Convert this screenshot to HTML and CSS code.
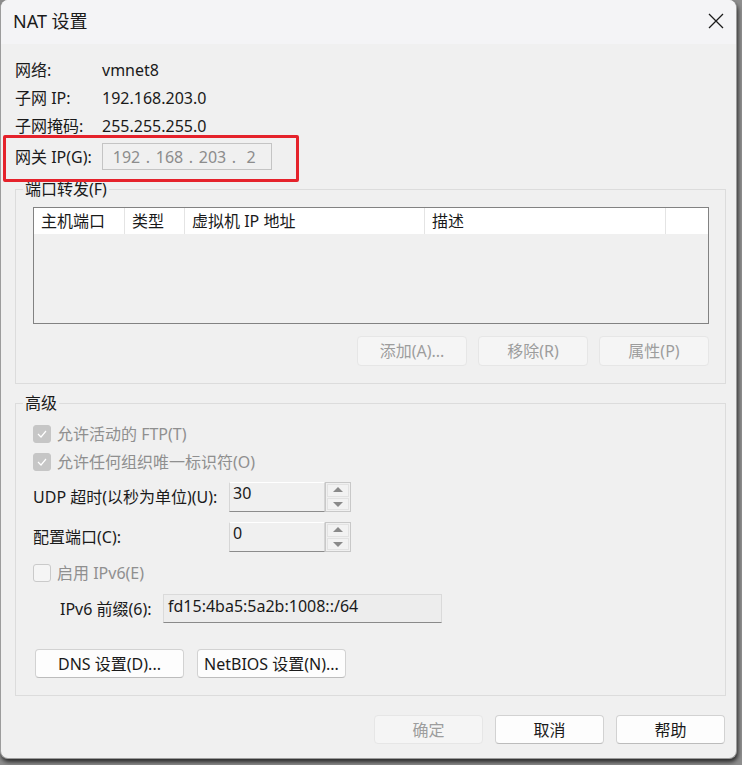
FILE: index.html
```html
<!DOCTYPE html>
<html lang="zh-CN">
<head>
    <meta charset="UTF-8">
    <title>NAT 设置</title>
    <link rel="stylesheet" href="styles.css">
</head>
<body>
    <div class="window">
        <div class="titlebar">
            <span class="title">NAT 设置</span>
            <svg class="close" width="16" height="16" viewBox="0 0 16 16">
                <path d="M1 1 L15 15 M15 1 L1 15" stroke="#1b1b1b" stroke-width="1.3" fill="none"/>
            </svg>
        </div>

        <div class="content">
            <div class="info">
                <div class="info-row"><span class="key">网络:</span><span>vmnet8</span></div>
                <div class="info-row"><span class="key">子网 IP:</span><span>192.168.203.0</span></div>
                <div class="info-row"><span class="key">子网掩码:</span><span>255.255.255.0</span></div>
                <div class="info-row gateway">
                    <span class="key">网关 IP(G):</span>
                    <div class="ip-box">
                        <span class="oct">192</span><span class="dot">.</span>
                        <span class="oct">168</span><span class="dot">.</span>
                        <span class="oct">203</span><span class="dot">.</span>
                        <span class="oct">2</span>
                    </div>
                </div>
            </div>

            <fieldset class="group">
                <legend>端口转发(F)</legend>
                <div class="grid">
                    <div class="grid-head">
                        <span class="c1">主机端口</span>
                        <span class="c2">类型</span>
                        <span class="c3">虚拟机 IP 地址</span>
                        <span class="c4">描述</span>
                        <span class="c5"></span>
                    </div>
                </div>
                <div class="btn-row">
                    <button class="btn" disabled>添加(A)...</button>
                    <button class="btn" disabled>移除(R)</button>
                    <button class="btn" disabled>属性(P)</button>
                </div>
            </fieldset>

            <fieldset class="group advanced">
                <legend>高级</legend>
                <div class="check-row first">
                    <span class="box checked"><svg width="10" height="8" viewBox="0 0 10 8"><path d="M1 4 L4 7 L9 1" stroke="#fff" stroke-width="1.2" fill="none"/></svg></span>
                    <span>允许活动的 FTP(T)</span>
                </div>
                <div class="check-row">
                    <span class="box checked"><svg width="10" height="8" viewBox="0 0 10 8"><path d="M1 4 L4 7 L9 1" stroke="#fff" stroke-width="1.2" fill="none"/></svg></span>
                    <span>允许任何组织唯一标识符(O)</span>
                </div>
                <div class="spin-row udp">
                    <span class="spin-label">UDP 超时(以秒为单位)(U):</span>
                    <div class="spin">
                        <span class="spin-input">30</span>
                        <div class="spin-btns">
                            <span class="up"></span>
                            <span class="down"></span>
                        </div>
                    </div>
                </div>
                <div class="spin-row port">
                    <span class="spin-label">配置端口(C):</span>
                    <div class="spin">
                        <span class="spin-input">0</span>
                        <div class="spin-btns">
                            <span class="up"></span>
                            <span class="down"></span>
                        </div>
                    </div>
                </div>
                <div class="check-row ipv6">
                    <span class="box"></span>
                    <span>启用 IPv6(E)</span>
                </div>
                <div class="prefix-row">
                    <span class="prefix-label">IPv6 前缀(6):</span>
                    <span class="prefix-field">fd15:4ba5:5a2b:1008::/64</span>
                </div>
                <div class="dns-row">
                    <button class="btn wide">DNS 设置(D)...</button>
                    <button class="btn wide">NetBIOS 设置(N)...</button>
                </div>
            </fieldset>
        </div>

        <div class="footer">
            <button class="btn foot" disabled>确定</button>
            <button class="btn foot">取消</button>
            <button class="btn foot">帮助</button>
        </div>

        <div class="highlight"></div>
    </div>
</body>
</html>
```

FILE: styles.css
```css
html, body {
    margin: 0;
    padding: 0;
}
body {
    background: #8e8e8e;
    font-family: "Noto Sans", "Noto Sans CJK SC", sans-serif;
    font-size: 16px;
    color: #1a1a1a;
    height: 765px;
    overflow: hidden;
}
.window {
    position: relative;
    width: 735px;
    height: 758px;
    background: #f0f0f0;
    border: 1px solid #9c9c9c;
    border-top: none;
    border-radius: 8px;
    box-shadow: 1px 3px 4px rgba(0, 0, 0, 0.7);
    overflow: hidden;
}
.titlebar {
    height: 44px;
    background: #f4f4f6;
    display: flex;
    align-items: center;
    justify-content: space-between;
    padding: 0 12px 0 12px;
}
.title {
    font-size: 18px;
    line-height: 24px;
    margin-top: -2px;
}
.close {
    margin-top: -2px;
}
.content {
    padding: 12px 10px 0 14px;
}
.info-row {
    display: flex;
    align-items: center;
    height: 28px;
    line-height: 22px;
}
.key {
    width: 87px;
}
.gateway {
    height: 27px;
    margin-top: 3px;
}
.ip-box {
    width: 159px;
    height: 25px;
    border: 1px solid #c4c4c4;
    background: #f0f0f0;
    color: #8c8c8c;
    display: flex;
    align-items: center;
    padding-left: 9px;
    box-sizing: content-box;
}
.ip-box .oct {
    width: 29px;
    text-align: center;
}
.ip-box .dot {
    width: 14px;
    text-align: center;
}
.ip-box .oct:last-child {
    width: 20px;
}
.group {
    margin: 8px 0 0 0;
    padding: 7px 16px 17px 17px;
    border: 1px solid #dcdcdc;
    min-width: 0;
}
.group legend {
    padding: 0 2px;
    margin-left: -10px;
    line-height: 22px;
    color: #1a1a1a;
}
.grid {
    height: 115px;
    border: 1px solid #828282;
    background: #f0f0f0;
}
.grid-head {
    display: flex;
    height: 26px;
    background: #fff;
    line-height: 26px;
}
.grid-head span {
    border-right: 1px solid #e4e4e4;
    padding-left: 7px;
    box-sizing: border-box;
}
.grid-head .c1 { width: 91px; }
.grid-head .c2 { width: 60px; }
.grid-head .c3 { width: 240px; }
.grid-head .c4 { width: 241px; }
.grid-head .c5 { flex: 1; border-right: none; }
.btn-row {
    display: flex;
    justify-content: flex-end;
    gap: 11px;
    margin-top: 12px;
}
.btn {
    font-family: inherit;
    font-size: 16px;
    color: #1a1a1a;
    background: #fdfdfd;
    border: 1px solid #d2d2d2;
    border-bottom-color: #bcbcbc;
    border-radius: 4px;
    height: 30px;
    width: 110px;
    padding: 0;
    line-height: 26px;
}
.btn:disabled {
    background: #f5f5f5;
    border-color: #e6e6e6;
    color: #9d9d9d;
}
.advanced {
    padding-top: 5px;
}
.check-row {
    display: flex;
    align-items: center;
    height: 28px;
    color: #8f8f8f;
    line-height: 22px;
}
.check-row.first {
    margin-top: 1px;
}
.box {
    width: 18px;
    height: 18px;
    box-sizing: border-box;
    border-radius: 3px;
    border: 1px solid #cacaca;
    background: #f5f5f5;
    margin-right: 6px;
    display: flex;
    align-items: center;
    justify-content: center;
}
.box.checked {
    background: #c6c6c6;
    border-color: #c6c6c6;
}
.spin-row {
    display: flex;
    align-items: center;
    height: 30px;
    line-height: 22px;
}
.spin-row.udp { margin-top: 6px; }
.spin-row.port { margin-top: 10px; }
.spin-label {
    width: 196px;
}
.spin {
    display: flex;
    height: 30px;
}
.spin-input {
    width: 96px;
    box-sizing: border-box;
    border: 1px solid;
    border-color: #ffffff #d6d6d6 #8c8c8c #d6d6d6;
    background: #f0f0f0;
    padding: 0 0 0 3px;
    line-height: 20px;
}
.spin-btns {
    width: 26px;
    box-sizing: border-box;
    border: 1px solid #c8c8c8;
    display: flex;
    flex-direction: column;
    padding: 1px;
    gap: 1px;
}
.spin-btns span {
    flex: 1;
    border: 1px solid #e2e2e2;
    background: #f2f2f2;
    position: relative;
}
.spin-btns span::after {
    content: "";
    position: absolute;
    left: 50%;
    top: 50%;
    margin-left: -5px;
    border-left: 5px solid transparent;
    border-right: 5px solid transparent;
}
.spin-btns .up::after {
    margin-top: -3px;
    border-bottom: 5px solid #8a8a8a;
}
.spin-btns .down::after {
    margin-top: -2px;
    border-top: 5px solid #8a8a8a;
}
.check-row.ipv6 {
    margin-top: 7px;
}
.prefix-row {
    display: flex;
    align-items: center;
    height: 29px;
    margin-top: 7px;
    line-height: 22px;
}
.prefix-label {
    width: 103px;
    padding-left: 27px;
}
.prefix-field {
    width: 279px;
    height: 29px;
    box-sizing: border-box;
    border: 1px solid #dadada;
    border-bottom-color: #8a8a8a;
    background: #ededed;
    padding: 0 0 0 4px;
    line-height: 22px;
}
.dns-row {
    display: flex;
    gap: 13px;
    margin-top: 26px;
    padding-left: 2px;
}
.btn.wide {
    width: 149px;
    height: 29px;
}
.footer {
    display: flex;
    justify-content: flex-end;
    gap: 12px;
    padding: 19px 11px 0 0;
}
.btn.foot {
    width: 109px;
    height: 29px;
}
/* red marker around the gateway row */
.highlight {
    position: absolute;
    left: 2px;
    top: 135px;
    width: 290px;
    height: 41px;
    border: 3px solid #e5222b;
    border-radius: 2px;
}
```
